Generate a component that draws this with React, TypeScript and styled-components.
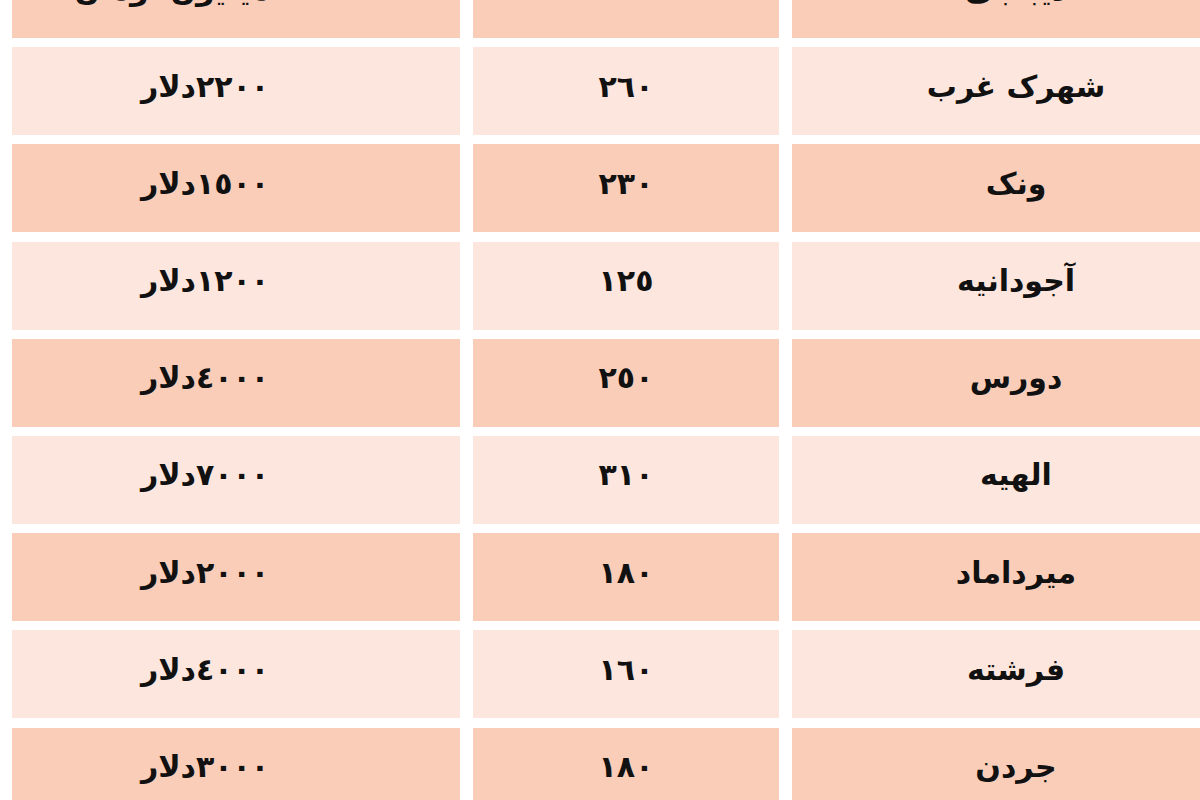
import styled, { createGlobalStyle } from "styled-components";

const GlobalStyle = createGlobalStyle`
  html, body {
    margin: 0;
    padding: 0;
    background: #ffffff;
    overflow: hidden;
  }
`;

const Page = styled.div`
  width: 1200px;
  height: 800px;
  overflow: hidden;
  background: #ffffff;
`;

const Table = styled.div`
  display: grid;
  grid-template-columns: 448px 306px 448px;
  grid-auto-rows: 88px;
  column-gap: 13px;
  row-gap: 9.2px;
  margin-top: -50px;
  padding-left: 12px;
`;

const Cell = styled.div<{ $dark: boolean; $shift?: number }>`
  display: flex;
  align-items: center;
  justify-content: center;
  padding-right: ${(p) => p.$shift ?? 0}px;
  padding-bottom: 10px;
  background: ${(p) => (p.$dark ? "#facdb9" : "#fde6dd")};
  direction: rtl;
  font-family: "DejaVu Sans", "Noto Sans", sans-serif;
  font-weight: bold;
  font-size: 30px;
  color: #111111;
  white-space: nowrap;
`;

type Row = { name: string; area: string; price: string };

const rows: Row[] = [
  { name: "دیباجی", area: "٣٢٠", price: "٢٠٠ میلیون تومان" },
  { name: "شهرک غرب", area: "٢٦٠", price: "٢٢٠٠دلار" },
  { name: "ونک", area: "٢٣٠", price: "١٥٠٠دلار" },
  { name: "آجودانیه", area: "١٢٥", price: "١٢٠٠دلار" },
  { name: "دورس", area: "٢٥٠", price: "٤٠٠٠دلار" },
  { name: "الهیه", area: "٣١٠", price: "٧٠٠٠دلار" },
  { name: "میرداماد", area: "١٨٠", price: "٢٠٠٠دلار" },
  { name: "فرشته", area: "١٦٠", price: "٤٠٠٠دلار" },
  { name: "جردن", area: "١٨٠", price: "٣٠٠٠دلار" },
];

export default function App() {
  return (
    <Page>
      <GlobalStyle />
      <Table>
        {rows.map((r, i) => {
          const dark = i % 2 === 0;
          return [
            <Cell key={`p${i}`} $dark={dark} $shift={62}>
              {r.price}
            </Cell>,
            <Cell key={`a${i}`} $dark={dark}>
              {r.area}
            </Cell>,
            <Cell key={`n${i}`} $dark={dark}>
              {r.name}
            </Cell>,
          ];
        })}
      </Table>
    </Page>
  );
}
